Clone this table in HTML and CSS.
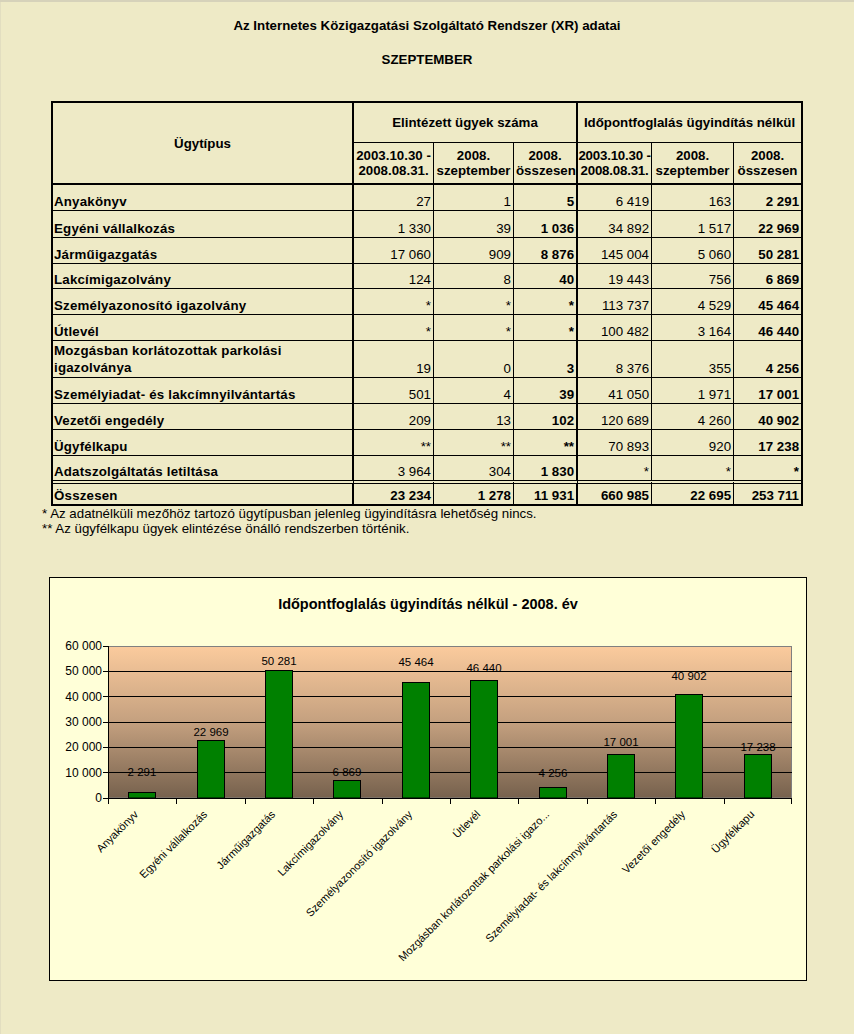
FILE: index.html
```html
<!DOCTYPE html>
<html lang="hu">
<head>
<meta charset="utf-8">
<title>XR adatai</title>
<link rel="stylesheet" href="styles.css">
</head>
<body>
<div class="page">
  <h1 class="title">Az Internetes Közigazgatási Szolgáltató Rendszer (XR) adatai</h1>
  <h2 class="month">SZEPTEMBER</h2>

  <table class="data">
    <colgroup>
      <col class="c1"><col class="c2"><col class="c3"><col class="c4"><col class="c5"><col class="c6"><col class="c7">
    </colgroup>
    <thead>
      <tr class="h1">
        <th rowspan="2" class="type sep">Ügytípus</th>
        <th colspan="3" class="grp sep">Elintézett ügyek száma</th>
        <th colspan="3" class="grp last">Időpontfoglalás ügyindítás nélkül</th>
      </tr>
      <tr class="h2">
        <th>2003.10.30 -<br>2008.08.31.</th>
        <th>2008.<br>szeptember</th>
        <th class="sep">2008.<br>összesen</th>
        <th class="tight">2003.10.30 -<br>2008.08.31.</th>
        <th>2008.<br>szeptember</th>
        <th class="last">2008.<br>összesen</th>
      </tr>
    </thead>
    <tbody>
      <tr class="r26"><td class="name sep">Anyakönyv</td><td>27</td><td>1</td><td class="b sep">5</td><td>6 419</td><td>163</td><td class="b last">2 291</td></tr>
      <tr class="r27"><td class="name sep">Egyéni vállalkozás</td><td>1 330</td><td>39</td><td class="b sep">1 036</td><td>34 892</td><td>1 517</td><td class="b last">22 969</td></tr>
      <tr class="r26"><td class="name sep">Járműigazgatás</td><td>17 060</td><td>909</td><td class="b sep">8 876</td><td>145 004</td><td>5 060</td><td class="b last">50 281</td></tr>
      <tr class="r25"><td class="name sep">Lakcímigazolvány</td><td>124</td><td>8</td><td class="b sep">40</td><td>19 443</td><td>756</td><td class="b last">6 869</td></tr>
      <tr class="r26"><td class="name sep">Személyazonosító igazolvány</td><td>*</td><td>*</td><td class="b sep">*</td><td>113 737</td><td>4 529</td><td class="b last">45 464</td></tr>
      <tr class="r26"><td class="name sep">Útlevél</td><td>*</td><td>*</td><td class="b sep">*</td><td>100 482</td><td>3 164</td><td class="b last">46 440</td></tr>
      <tr class="r37"><td class="name sep two">Mozgásban korlátozottak parkolási<br>igazolványa</td><td>19</td><td>0</td><td class="b sep">3</td><td>8 376</td><td>355</td><td class="b last">4 256</td></tr>
      <tr class="r26"><td class="name sep">Személyiadat- és lakcímnyilvántartás</td><td>501</td><td>4</td><td class="b sep">39</td><td>41 050</td><td>1 971</td><td class="b last">17 001</td></tr>
      <tr class="r26"><td class="name sep">Vezetői engedély</td><td>209</td><td>13</td><td class="b sep">102</td><td>120 689</td><td>4 260</td><td class="b last">40 902</td></tr>
      <tr class="r26"><td class="name sep">Ügyfélkapu</td><td>**</td><td>**</td><td class="b sep">**</td><td>70 893</td><td>920</td><td class="b last">17 238</td></tr>
      <tr class="r24 lastrow"><td class="name sep">Adatszolgáltatás letiltása</td><td>3 964</td><td>304</td><td class="b sep">1 830</td><td>*</td><td>*</td><td class="b last">*</td></tr>
    </tbody>
    <tfoot>
      <tr class="total"><td class="name sep">Összesen</td><td>23 234</td><td>1 278</td><td class="sep">11 931</td><td>660 985</td><td>22 695</td><td class="last">253 711</td></tr>
    </tfoot>
  </table>

  <div class="notes">
    <p>* Az adatnélküli mezőhöz tartozó ügytípusban jelenleg ügyindításra lehetőség nincs.</p>
    <p>** Az ügyfélkapu ügyek elintézése önálló rendszerben történik.</p>
  </div>

  <div class="chart">
    <svg class="chart-svg" width="756" height="402" viewBox="50 578 756 402" xmlns="http://www.w3.org/2000/svg">
      <defs>
        <linearGradient id="plotbg" x1="0" y1="0" x2="0" y2="1">
          <stop offset="0" stop-color="#FBCB9D"/>
          <stop offset="0.5" stop-color="#C4A07F"/>
          <stop offset="1" stop-color="#76614D"/>
        </linearGradient>
      </defs>
      <text class="ctitle" x="428" y="609" text-anchor="middle">Időpontfoglalás ügyindítás nélkül - 2008. év</text>

      <rect x="108.5" y="646.5" width="683" height="151.5" fill="url(#plotbg)" stroke="#808080" stroke-width="1"/>

      <g class="grid">
        <line x1="108" y1="671.5" x2="792" y2="671.5"/>
        <line x1="108" y1="696.5" x2="792" y2="696.5"/>
        <line x1="108" y1="722.5" x2="792" y2="722.5"/>
        <line x1="108" y1="747.5" x2="792" y2="747.5"/>
        <line x1="108" y1="772.5" x2="792" y2="772.5"/>
      </g>

      <g class="axis">
        <line x1="108.5" y1="646" x2="108.5" y2="799"/>
        <line x1="103" y1="798.5" x2="792" y2="798.5"/>
        <line x1="103" y1="646.5" x2="108" y2="646.5"/>
        <line x1="103" y1="671.5" x2="108" y2="671.5"/>
        <line x1="103" y1="696.5" x2="108" y2="696.5"/>
        <line x1="103" y1="722.5" x2="108" y2="722.5"/>
        <line x1="103" y1="747.5" x2="108" y2="747.5"/>
        <line x1="103" y1="772.5" x2="108" y2="772.5"/>
        <line x1="108.5" y1="798" x2="108.5" y2="804"/>
        <line x1="176.5" y1="798" x2="176.5" y2="804"/>
        <line x1="245.5" y1="798" x2="245.5" y2="804"/>
        <line x1="313.5" y1="798" x2="313.5" y2="804"/>
        <line x1="382.5" y1="798" x2="382.5" y2="804"/>
        <line x1="450.5" y1="798" x2="450.5" y2="804"/>
        <line x1="518.5" y1="798" x2="518.5" y2="804"/>
        <line x1="587.5" y1="798" x2="587.5" y2="804"/>
        <line x1="655.5" y1="798" x2="655.5" y2="804"/>
        <line x1="724.5" y1="798" x2="724.5" y2="804"/>
        <line x1="791.5" y1="798" x2="791.5" y2="804"/>
      </g>

      <g class="ylab">
        <text x="102" y="650">60 000</text>
        <text x="102" y="675">50 000</text>
        <text x="102" y="701">40 000</text>
        <text x="102" y="726">30 000</text>
        <text x="102" y="751">20 000</text>
        <text x="102" y="777">10 000</text>
        <text x="102" y="802">0</text>
      </g>

      <g class="bars">
        <rect x="128.5" y="792.5" width="27" height="5.5"/>
        <rect x="197.5" y="740.5" width="27" height="57.5"/>
        <rect x="265.5" y="670.5" width="27" height="127.5"/>
        <rect x="333.5" y="780.5" width="27" height="17.5"/>
        <rect x="402.5" y="682.5" width="27" height="115.5"/>
        <rect x="470.5" y="680.5" width="27" height="117.5"/>
        <rect x="539.5" y="787.5" width="27" height="10.5"/>
        <rect x="607.5" y="754.5" width="27" height="43.5"/>
        <rect x="675.5" y="694.5" width="27" height="103.5"/>
        <rect x="744.5" y="754.5" width="27" height="43.5"/>
      </g>

      <g class="vlab">
        <text x="142" y="776">2 291</text>
        <text x="211" y="736">22 969</text>
        <text x="279" y="665">50 281</text>
        <text x="347" y="776">6 869</text>
        <text x="416" y="666">45 464</text>
        <text x="484" y="672">46 440</text>
        <text x="553" y="777">4 256</text>
        <text x="621" y="746">17 001</text>
        <text x="689" y="680">40 902</text>
        <text x="758" y="751">17 238</text>
      </g>

      <g class="xlab">
        <text transform="translate(139 815) rotate(-45)">Anyakönyv</text>
        <text transform="translate(208 815) rotate(-45)">Egyéni vállalkozás</text>
        <text transform="translate(276 815) rotate(-45)">Járműigazgatás</text>
        <text transform="translate(344 815) rotate(-45)">Lakcímigazolvány</text>
        <text transform="translate(413 815) rotate(-45)">Személyazonosító igazolvány</text>
        <text transform="translate(481 815) rotate(-45)">Útlevél</text>
        <text transform="translate(550 815) rotate(-45)">Mozgásban korlátozottak parkolási igazo...</text>
        <text transform="translate(618 815) rotate(-45)">Személyiadat- és lakcímnyilvántartás</text>
        <text transform="translate(686 815) rotate(-45)">Vezetői engedély</text>
        <text transform="translate(755 815) rotate(-45)">Ügyfélkapu</text>
      </g>
    </svg>
  </div>
</div>
</body>
</html>
```

FILE: styles.css
```css
html, body {
  margin: 0;
  padding: 0;
}

body {
  background: #EEEAC6;
  font-family: "Liberation Sans", Arial, sans-serif;
  color: #000;
}

.page {
  width: 854px;
  min-height: 1034px;
  box-shadow: inset 0 2px 0 #D6D2BA, inset 1px 0 0 #E2DEC0;
  padding-top: 18px;
  box-sizing: border-box;
}

.title {
  margin: 0;
  font-size: 13.3px;
  font-weight: bold;
  line-height: 16px;
  text-align: center;
}

.month {
  margin: 18px 0 0;
  font-size: 13.3px;
  font-weight: bold;
  line-height: 16px;
  text-align: center;
}

/* ---------- table ---------- */
.data {
  margin: 33px 0 0 51px;
  border: 2px solid #000;
  border-spacing: 0;
  table-layout: fixed;
  width: 752px;
  font-size: 13.3px;
}

.c1 { width: 301px; }
.c2 { width: 80px; }
.c3 { width: 80px; }
.c4 { width: 64px; }
.c5 { width: 74px; }
.c6 { width: 82px; }
.c7 { width: 67px; }

.data th,
.data td {
  box-sizing: border-box;
  border-right: 1px solid #000;
  border-bottom: 1px solid #000;
  padding: 0 2px;
  white-space: nowrap;
  overflow: hidden;
}

.data th {
  font-weight: bold;
  text-align: center;
  vertical-align: middle;
  line-height: 15px;
}

.data th.tight {
  padding: 0;
  overflow: visible;
  letter-spacing: -0.2px;
}

.data .sep { border-right-width: 2px; }
.data .last { border-right: 0; }

.h1 th { height: 40px; }
.h2 th { height: 42px; border-bottom-width: 2px; }
.data th.type { border-bottom-width: 2px; }

.data td {
  text-align: right;
  vertical-align: bottom;
  line-height: 15px;
  padding-bottom: 1px;
  padding-right: 2px;
}

.data td.name {
  text-align: left;
  font-weight: bold;
  padding-left: 1px;
  letter-spacing: 0.2px;
}

.data td.two { line-height: 17px; }
.data td.b { font-weight: bold; }

.r24 td { height: 24px; }
.r25 td { height: 25px; }
.r26 td { height: 26px; }
.r27 td { height: 27px; }
.r37 td { height: 37px; }

.lastrow td { border-bottom: 0; }

.total td {
  height: 24px;
  border-top: 4px double #000;
  border-bottom: 0;
  font-weight: bold;
}

/* ---------- notes ---------- */
.notes {
  margin: 0 0 0 42px;
  font-size: 13.3px;
  line-height: 15px;
}

.notes p { margin: 0; }

/* ---------- chart ---------- */
.chart {
  margin: 41px 0 0 49px;
  width: 758px;
  height: 404px;
  border: 1px solid #000;
  box-sizing: border-box;
  background: #FFFFD8;
}

.chart-svg {
  display: block;
  font-family: "Liberation Sans", Arial, sans-serif;
}

.ctitle {
  font-size: 14.5px;
  font-weight: bold;
}

.grid line,
.axis line {
  stroke: #000;
  stroke-width: 1;
}

.ylab text {
  font-size: 12px;
  text-anchor: end;
}

.bars rect {
  fill: #008000;
  stroke: #000;
  stroke-width: 1;
}

.vlab text {
  font-size: 11.5px;
  text-anchor: middle;
}

.xlab text {
  font-size: 11px;
  text-anchor: end;
}
```
